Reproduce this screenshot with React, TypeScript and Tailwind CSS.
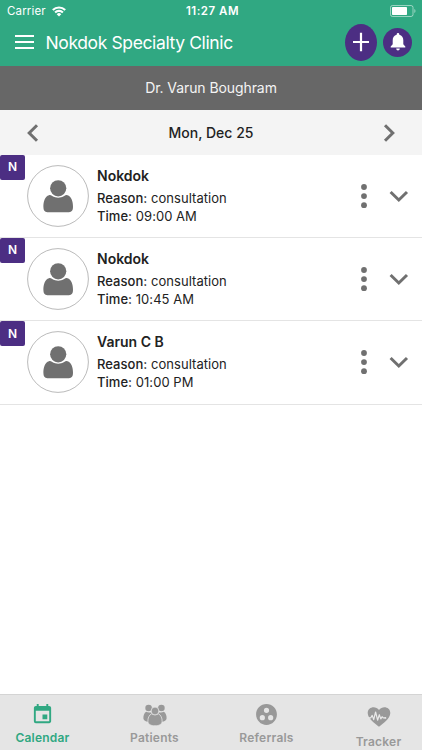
import { MdEvent, MdGroupWork } from 'react-icons/md';

const appointments = [
  { name: 'Nokdok', reason: 'consultation', time: '09:00 AM' },
  { name: 'Nokdok', reason: 'consultation', time: '10:45 AM' },
  { name: 'Varun C B', reason: 'consultation', time: '01:00 PM' },
];

function Wifi() {
  return (
    <svg width="14" height="11" viewBox="0 0 14 11" fill="none" stroke="white" strokeWidth="2.1">
      <path d="M.8 4.1a8.8 8.8 0 0 1 12.4 0" />
      <path d="M3.1 6.5a5.5 5.5 0 0 1 7.8 0" />
      <path d="M7 10.6 4.7 8.2a3.3 3.3 0 0 1 4.6 0Z" fill="white" stroke="none" />
    </svg>
  );
}

function Battery() {
  return (
    <svg width="26" height="12" viewBox="0 0 26 12" fill="none">
      <rect x=".5" y=".5" width="22.5" height="11" rx="2" stroke="white" strokeOpacity=".5" />
      <rect x="2" y="2" width="15" height="8" rx=".7" fill="white" />
      <path d="M24.3 4v4c1.6-.6 1.6-3.4 0-4Z" fill="white" fillOpacity=".5" />
    </svg>
  );
}

function Avatar() {
  return (
    <svg width="62" height="62" viewBox="0 0 62 62" className="shrink-0">
      <circle cx="31" cy="31" r="30.4" fill="white" stroke="#a8a8a8" strokeWidth=".8" />
      <circle cx="31.2" cy="23.3" r="8.1" fill="#707070" />
      <path
        d="M22 30.2c1.2-.3 2.2.2 3.2.8 3.7 2.2 8.300 2.200 12 0 1-.6 2-1.100 3.200-.8 4 1 5.700 6.500 5.600 11.800 0 3.400-1.200 5.200-4 5.200H20.400c-2.800 0-4-1.800-4-5.200-.1-5.300 1.600-10.800 5.600-11.800Z"
        fill="#707070"
      />
    </svg>
  );
}

function Patients() {
  return (
    <svg width="24" height="22" viewBox="0 0 24 22" fill="#999">
      <circle cx="5.6" cy="4" r="3.3" />
      <circle cx="18.4" cy="4" r="3.3" />
      <path d="M3.2 7.7C1.3 8.700.2 11.500.4 14.500c.2 2 2.200 3 4.800 3.200L9 9C7.500 8 5 8.700 3.200 7.700Z" />
      <path d="M20.8 7.7c1.900 1 3 3.800 2.800 6.800-.2 2-2.200 3-4.800 3.200L15 9c1.500-1 4-.3 5.800-1.300Z" />
      <g stroke="#e5e5e5" strokeWidth=".8">
        <path d="M8.6 9.8c-2.500 1-3.900 4.500-3.700 7.700.2 3 3.300 4.300 7.100 4.300s6.900-1.300 7.100-4.300c.2-3.200-1.200-6.700-3.700-7.700-2 1.300-4.800 1.300-6.800 0Z" />
        <circle cx="12" cy="7" r="3.9" />
      </g>
    </svg>
  );
}

function Tracker() {
  return (
    <svg width="24" height="22" viewBox="0 0 24 22" fill="none">
      <path
        d="M12 20.8C8 17.300.7 12.500.7 6.900.7 1.100 8.300-.8 12 3.900c3.700-4.700 11.300-2.800 11.300 3 0 5.600-7.300 10.400-11.300 13.900Z"
        fill="#999"
      />
      <path
        d="M1.5 11.800h2.300l1.400-2.400 1.500 4.200L8.600 6l2 8.200 1.700-5.500 1.500 4.200 1.300-2.200 1.100 1.200h2"
        stroke="#e9e9e9"
        strokeWidth="1.2"
        strokeLinejoin="round"
      />
      <circle cx="18.4" cy="11.9" r=".9" fill="#e9e9e9" />
    </svg>
  );
}

const tabs = [
  { label: 'Calendar', icon: <MdEvent size={23} />, style: 'gap-[3px] text-[#30a882]' },
  { label: 'Patients', icon: <Patients />, style: 'gap-[3px] text-[#999]' },
  { label: 'Referrals', icon: <MdGroupWork size={25} />, style: 'gap-[3px] text-[#999]' },
  { label: 'Tracker', icon: <Tracker />, style: 'gap-[5px] pt-[9px] text-[#999]' },
];

export default function App() {
  return (
    <div className="flex h-[750px] w-[422px] flex-col overflow-hidden bg-white font-['Inter','Liberation_Sans',sans-serif] text-[#222]">
      {/* Header */}
      <header className="h-[66px] shrink-0 bg-[#30a882] text-white">
        <div className="grid h-[22px] grid-cols-3 items-center pr-[6px] pl-[7px]">
          <div className="flex items-center gap-[6px] pt-px text-[11.5px] tracking-[0.15px]">
            Carrier <Wifi />
          </div>
          <div className="pt-px pl-[2px] text-center text-[11.5px] font-semibold tracking-[0.5px]">11:27 AM</div>
          <div className="flex justify-end">
            <Battery />
          </div>
        </div>
        <div className="flex h-10 items-center pr-[10px] pl-[15px]">
          <svg width="19" height="14" viewBox="0 0 19 14" stroke="white" strokeWidth="2">
            <path d="M0 1h19M0 7h19M0 13h19" />
          </svg>
          <h1 className="ml-[11.5px] flex-1 pt-[2px] text-[17.5px] tracking-[-0.38px] whitespace-nowrap">Nokdok Specialty Clinic</h1>
          <button className="flex h-[37px] w-[32px] shrink-0 items-center justify-center rounded-[50%] bg-[#4c2e83]">
            <svg width="16" height="20" viewBox="0 0 16 20" stroke="white" strokeWidth="2.2">
              <path d="M8 .7v18.6M0 10h16" />
            </svg>
          </button>
          <button className="ml-[6px] flex size-[29px] shrink-0 items-center justify-center rounded-full bg-[#4c2e83]">
            <svg width="16" height="18" viewBox="0 0 16 18" fill="white">
              <path d="M8 0c.8 0 1.3.6 1.3 1.3v.5c2.7.7 4 2.8 4 5.4v4l2 2.300v1H.7v-1l2-2.300v-4c0-2.600 1.300-4.700 4-5.400v-.5C6.700.6 7.200 0 8 0ZM6.200 15.500h3.600C9.800 18 6.200 18 6.200 15.500Z" />
            </svg>
          </button>
        </div>
      </header>

      <div className="flex h-11 shrink-0 items-center justify-center bg-[#676767] pb-px text-[14px] tracking-[-0.08px] text-[#f4f4f4]">
        Dr. Varun Boughram
      </div>

      {/* Date picker */}
      <div className="flex h-[45px] shrink-0 items-center justify-between bg-[#f4f4f4] px-[27px]">
        <svg width="12" height="18" viewBox="0 0 12 18" fill="none" stroke="#707070" strokeWidth="3">
          <path d="M10 1.200 2.200 9l7.800 7.800" />
        </svg>
        <span className="text-[14px] font-medium">Mon, Dec 25</span>
        <svg width="12" height="18" viewBox="0 0 12 18" fill="none" stroke="#707070" strokeWidth="3">
          <path d="M2 1.200 9.800 9 2 16.800" />
        </svg>
      </div>

      {/* Appointments */}
      <main className="flex-1">
        {appointments.map((item, index) => (
          <div key={index} className="relative flex h-[83.2px] items-center border-b border-[#e4e4e4] pr-[13.5px] pl-[27px]">
            <span className="absolute top-0 left-0 flex h-[24.5px] w-[25px] items-center justify-center rounded-[2px] bg-[#4c2e83] text-[12px] font-semibold text-white">
              N
            </span>
            <Avatar />
            <div className="ml-2 flex-1 pb-[2px] text-[13px] leading-[18px] tracking-[0.04px]">
              <h2 className="mb-[3px] text-[14px] leading-5 font-semibold tracking-normal">{item.name}</h2>
              <p><span className="font-medium">Reason:</span> {item.reason}</p>
              <p><span className="font-medium">Time:</span> {item.time}</p>
            </div>
            <svg width="6" height="26" viewBox="0 0 6 26" fill="#707070">
              <circle cx="3" cy="4" r="2.9" />
              <circle cx="3" cy="13.1" r="2.9" />
              <circle cx="3" cy="22.2" r="2.9" />
            </svg>
            <svg className="ml-[22px]" width="20" height="14" viewBox="0 0 20 14" fill="none" stroke="#707070" strokeWidth="3">
              <path d="m1.600 3 8.200 8L18 3" />
            </svg>
          </div>
        ))}
      </main>

      {/* Tab bar */}
      <nav className="flex h-14 shrink-0 justify-center border-t border-[#d4d4d4] bg-[#e5e5e5] pr-px">
        {tabs.map((tab) => (
          <a key={tab.label} className={`flex w-28 shrink-0 flex-col items-center pt-[7px] ${tab.style}`}>
            <div className="flex h-[25px] items-center">{tab.icon}</div>
            <span className="text-[12px] leading-4 font-semibold tracking-[0.22px]">{tab.label}</span>
          </a>
        ))}
      </nav>
    </div>
  );
}
